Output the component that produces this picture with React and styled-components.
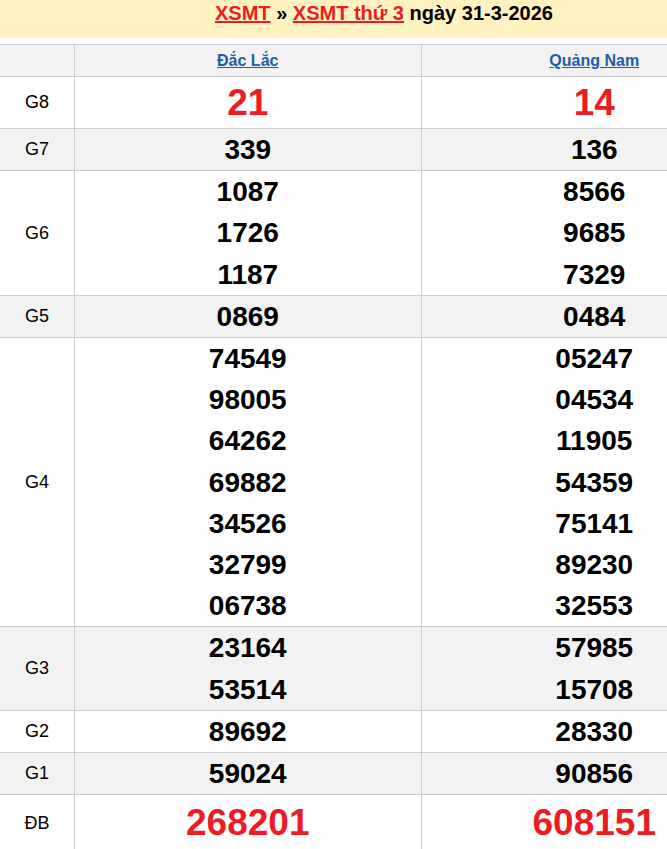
import React from 'react'
import styled, {createGlobalStyle, css} from 'styled-components'

const Global = createGlobalStyle`
  html, body {
    margin: 0;
    padding: 0;
    overflow: hidden;
    background: #fff;
    font-family: "Liberation Sans", Arial, sans-serif;
  }
`

const Page = styled.div`
  width: 768px;
`

const Title = styled.h2`
  margin: 0 0 6px;
  height: 38px;
  line-height: 26px;
  background: #fff2c1;
  text-align: center;
  font-size: 20px;
  font-weight: bold;
  color: #000;
`

const TitleLink = styled.a`
  color: #ed1c24;
  text-decoration: underline;
`

const Table = styled.table`
  width: 768px;
  border-collapse: collapse;
  table-layout: fixed;
  border-top: 1px solid #ccc;
`

const Row = styled.tr`
  background: ${({odd}) => odd ? '#f2f2f2' : '#fff'};
  border-bottom: 1px solid #ccc;
`

const Label = styled.td`
  width: 74px;
  padding: 0;
  border-right: 1px solid #ccc;
  text-align: center;
  font-size: 18px;
  color: #000;
`

const Cell = styled.td`
  padding: 0;
  border-right: 1px solid #ccc;
  text-align: center;
  vertical-align: middle;
`

const Province = styled.a`
  display: block;
  line-height: 31px;
  font-size: 16px;
  font-weight: bold;
  color: #1a5fae;
  text-decoration: underline;
`

const Num = styled.div`
  font-size: 28px;
  font-weight: bold;
  line-height: 41.2px;
  color: #000;
  ${({big}) => big && css`
    font-size: 37px;
    color: #ed1c24;
    line-height: ${big}px;
  `}
`

const data = [
  {name: 'G8', a: ['21'], b: ['14'], big: 51},
  {name: 'G7', a: ['339'], b: ['136']},
  {name: 'G6', a: ['1087', '1726', '1187'], b: ['8566', '9685', '7329']},
  {name: 'G5', a: ['0869'], b: ['0484']},
  {name: 'G4', a: ['74549', '98005', '64262', '69882', '34526', '32799', '06738'],
    b: ['05247', '04534', '11905', '54359', '75141', '89230', '32553']},
  {name: 'G3', a: ['23164', '53514'], b: ['57985', '15708']},
  {name: 'G2', a: ['89692'], b: ['28330']},
  {name: 'G1', a: ['59024'], b: ['90856']},
  {name: 'ĐB', a: ['268201'], b: ['608151'], big: 56},
]

export default function App() {
  return (
    <Page>
      <Global />
      <Title>
        <TitleLink href="#">XSMT</TitleLink> » <TitleLink href="#">XSMT thứ 3</TitleLink> ngày 31-3-2026
      </Title>
      <Table>
        <tbody>
          <Row odd>
            <Label></Label>
            <Cell><Province href="#">Đắc Lắc</Province></Cell>
            <Cell><Province href="#">Quảng Nam</Province></Cell>
          </Row>
          {data.map((r, i) => (
            <Row key={r.name} odd={i % 2 === 1}>
              <Label>{r.name}</Label>
              <Cell>{r.a.map((n, j) => <Num key={j} big={r.big}>{n}</Num>)}</Cell>
              <Cell>{r.b.map((n, j) => <Num key={j} big={r.big}>{n}</Num>)}</Cell>
            </Row>
          ))}
        </tbody>
      </Table>
    </Page>
  )
}
